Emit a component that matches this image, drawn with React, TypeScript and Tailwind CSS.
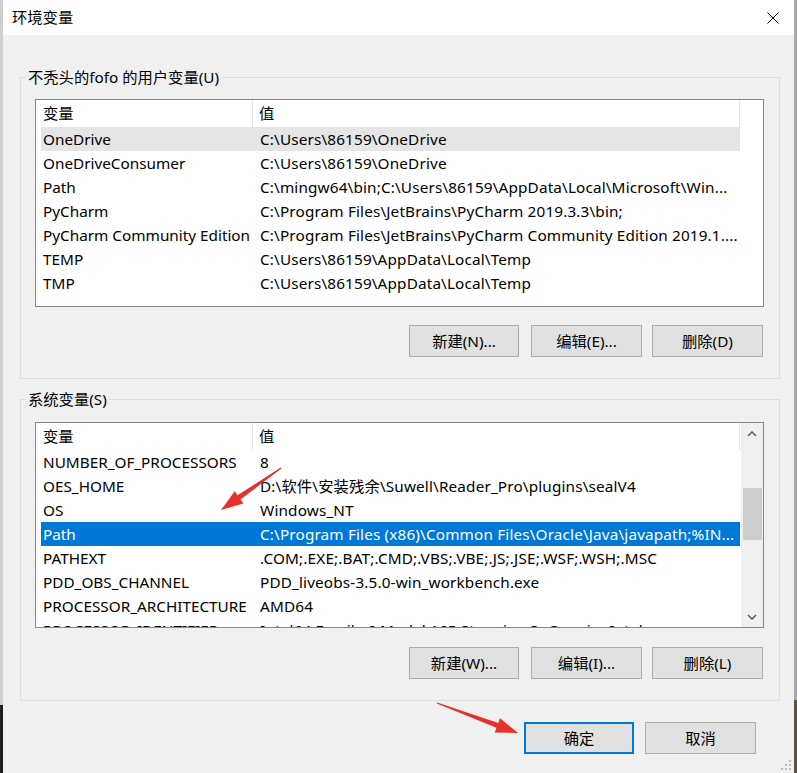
import React from "react";

const font = "font-['Noto_Sans','Noto_Sans_CJK_SC',sans-serif]";

const userVars: [string, string][] = [
  ["OneDrive", "C:\\Users\\86159\\OneDrive"],
  ["OneDriveConsumer", "C:\\Users\\86159\\OneDrive"],
  ["Path", "C:\\mingw64\\bin;C:\\Users\\86159\\AppData\\Local\\Microsoft\\Win..."],
  ["PyCharm", "C:\\Program Files\\JetBrains\\PyCharm 2019.3.3\\bin;"],
  ["PyCharm Community Edition", "C:\\Program Files\\JetBrains\\PyCharm Community Edition 2019.1...."],
  ["TEMP", "C:\\Users\\86159\\AppData\\Local\\Temp"],
  ["TMP", "C:\\Users\\86159\\AppData\\Local\\Temp"],
];

const sysVars: [string, string][] = [
  ["NUMBER_OF_PROCESSORS", "8"],
  ["OES_HOME", "D:\\软件\\安装残余\\Suwell\\Reader_Pro\\plugins\\sealV4"],
  ["OS", "Windows_NT"],
  ["Path", "C:\\Program Files (x86)\\Common Files\\Oracle\\Java\\javapath;%IN..."],
  ["PATHEXT", ".COM;.EXE;.BAT;.CMD;.VBS;.VBE;.JS;.JSE;.WSF;.WSH;.MSC"],
  ["PDD_OBS_CHANNEL", "PDD_liveobs-3.5.0-win_workbench.exe"],
  ["PROCESSOR_ARCHITECTURE", "AMD64"],
  ["PROCESSOR_IDENTIFIER", "Intel64 Family 6 Model 165 Stepping 3, GenuineIntel"],
];

function Row({ name, value, state }: { name: string; value: string; state?: "hover" | "selected" }) {
  const bg = state === "selected" ? "bg-[#0078d7] text-white" : state === "hover" ? "bg-[#e5e5e5]" : "";
  return (
    <div className={`flex h-[24px] w-[699px] shrink-0 items-center whitespace-nowrap ${bg}`}>
      <div className="w-[212px] shrink-0 overflow-hidden pl-[2px]">{name}</div>
      <div className="flex-1 overflow-hidden pl-[7px] tracking-[0.15px]">{value}</div>
    </div>
  );
}

function Header() {
  return (
    <div className="flex h-[27px] w-[704px] shrink-0 items-center">
      <div className="flex h-full w-[217px] items-center border-r border-[#e5e5e5] pl-[7px]">变量</div>
      <div className="flex h-full flex-1 items-center border-r border-[#e5e5e5] pl-[6px]">值</div>
    </div>
  );
}

function Chevron({ down }: { down?: boolean }) {
  return (
    <svg width="10" height="6" viewBox="0 0 10 6">
      <polyline
        points={down ? "1,1 5,5 9,1" : "1,5 5,1 9,5"}
        fill="none"
        stroke="#606060"
        strokeWidth="1.6"
      />
    </svg>
  );
}

function Btn({ children, primary }: { children: React.ReactNode; primary?: boolean }) {
  return (
    <div
      className={`flex h-[32px] items-center justify-center bg-[#e1e1e1] ${
        primary ? "border-2 border-[#0078d7]" : "border border-[#adadad]"
      }`}
    >
      {children}
    </div>
  );
}

function Arrow({ x1, y1, x2, y2 }: { x1: number; y1: number; x2: number; y2: number }) {
  const len = Math.hypot(x2 - x1, y2 - y1);
  const dx = (x2 - x1) / len;
  const dy = (y2 - y1) / len;
  const nx = -dy;
  const ny = dx;
  const hl = 22;
  const hx = x2 - dx * hl;
  const hy = y2 - dy * hl;
  const p = (x: number, y: number) => `${x.toFixed(1)},${y.toFixed(1)}`;
  const pts = [
    p(x1 + nx * 0.6, y1 + ny * 0.6),
    p(hx + nx * 2.6, hy + ny * 2.6),
    p(hx + nx * 7.5, hy + ny * 7.5),
    p(x2, y2),
    p(hx - nx * 7.5, hy - ny * 7.5),
    p(hx - nx * 2.6, hy - ny * 2.6),
    p(x1 - nx * 0.6, y1 - ny * 0.6),
  ].join(" ");
  return <polygon points={pts} fill="#e8302a" />;
}

export default function App() {
  return (
    <div className={`relative flex h-[773px] w-[797px] overflow-hidden text-[15.3px] text-black ${font}`}>
      {/* desktop strip on the left */}
      <div className="flex w-[3px] shrink-0 flex-col">
        <div className="h-[705px] bg-[#cfcfcf]" />
        <div className="flex-1 bg-[#1e1e1e]" />
      </div>

      <div className="flex flex-1 flex-col">
        {/* title bar */}
        <div className="flex h-[35px] shrink-0 items-center justify-between bg-white pl-[9px] pr-[15px]">
          <span>环境变量</span>
          <svg width="12" height="12" viewBox="0 0 12 12">
            <path d="M0.5 0.5 L11.5 11.5 M11.5 0.5 L0.5 11.5" stroke="#000" strokeWidth="1" />
          </svg>
        </div>

        <div className="flex flex-1 flex-col bg-[#f0f0f0] pl-[17px] pt-[32px]">
          {/* user variables */}
          <fieldset className="w-[760px] border border-[#dcdcdc] pb-[21px]">
            <legend className="ml-[5px] px-[2px] leading-[20px]">不秃头的fofo 的用户变量(U)</legend>
            <div className="mt-[12px] ml-[14px] flex h-[208px] w-[729px] border border-[#828790] bg-white">
              <div className="flex w-[704px] flex-col overflow-hidden">
                <Header />
                <div className="flex flex-col pl-[5px]">
                  {userVars.map(([n, v], i) => (
                    <Row key={n} name={n} value={v} state={i === 0 ? "hover" : undefined} />
                  ))}
                </div>
              </div>
              <div className="flex-1" />
            </div>
            <div className="mt-[18px] ml-[388px] flex">
              <div className="w-[110px]"><Btn>新建(N)...</Btn></div>
              <div className="ml-[12px] w-[111px]"><Btn>编辑(E)...</Btn></div>
              <div className="ml-[10px] w-[111px]"><Btn>删除(D)</Btn></div>
            </div>
          </fieldset>

          {/* system variables */}
          <fieldset className="mt-[10px] w-[760px] border border-[#dcdcdc] pb-[21px]">
            <legend className="ml-[5px] px-[2px] leading-[20px]">系统变量(S)</legend>
            <div className="mt-[13px] ml-[14px] flex h-[206px] w-[729px] border border-[#828790] bg-white">
              <div className="flex w-[705px] flex-col overflow-hidden">
                <Header />
                <div className="flex flex-col pl-[5px]">
                  {sysVars.map(([n, v]) => (
                    <Row key={n} name={n} value={v} state={n === "Path" ? "selected" : undefined} />
                  ))}
                </div>
              </div>
              <div className="flex flex-1 flex-col bg-[#f0f0f0]">
                <div className="flex h-[21px] items-center justify-center">
                  <Chevron />
                </div>
                <div className="flex-1 pt-[44px]">
                  <div className="mx-auto h-[52px] w-[19px] bg-[#cdcdcd]" />
                </div>
                <div className="flex h-[21px] items-center justify-center">
                  <Chevron down />
                </div>
              </div>
            </div>
            <div className="mt-[19px] ml-[388px] flex">
              <div className="w-[110px]"><Btn>新建(W)...</Btn></div>
              <div className="ml-[12px] w-[111px]"><Btn>编辑(I)...</Btn></div>
              <div className="ml-[10px] w-[111px]"><Btn>删除(L)</Btn></div>
            </div>
          </fieldset>

          <div className="mt-[21px] ml-[504px] flex">
            <div className="w-[110px]"><Btn primary>确定</Btn></div>
            <div className="ml-[11px] w-[111px]"><Btn>取消</Btn></div>
          </div>
        </div>
      </div>

      {/* right window edge */}
      <div className="flex w-[3px] shrink-0 flex-col">
        <div className="h-[700px] bg-[#a9a9a9]" />
        <div className="flex-1 bg-[#5b5246]" />
      </div>

      {/* size grip */}
      <svg className="pointer-events-none absolute right-[5px] bottom-[2px]" width="11" height="11" viewBox="0 0 11 11">
        {[
          [8, 0],
          [4, 4], [8, 4],
          [0, 8], [4, 8], [8, 8],
        ].map(([x, y]) => (
          <rect key={`${x}-${y}`} x={x} y={y} width="2" height="2" fill="#bcbcbc" />
        ))}
      </svg>

      {/* annotation arrows */}
      <svg className="pointer-events-none absolute inset-0" width="797" height="773">
        <Arrow x1={281} y1={468} x2={221} y2={510} />
        <Arrow x1={437} y1={703} x2={518} y2={733} />
      </svg>
    </div>
  );
}
